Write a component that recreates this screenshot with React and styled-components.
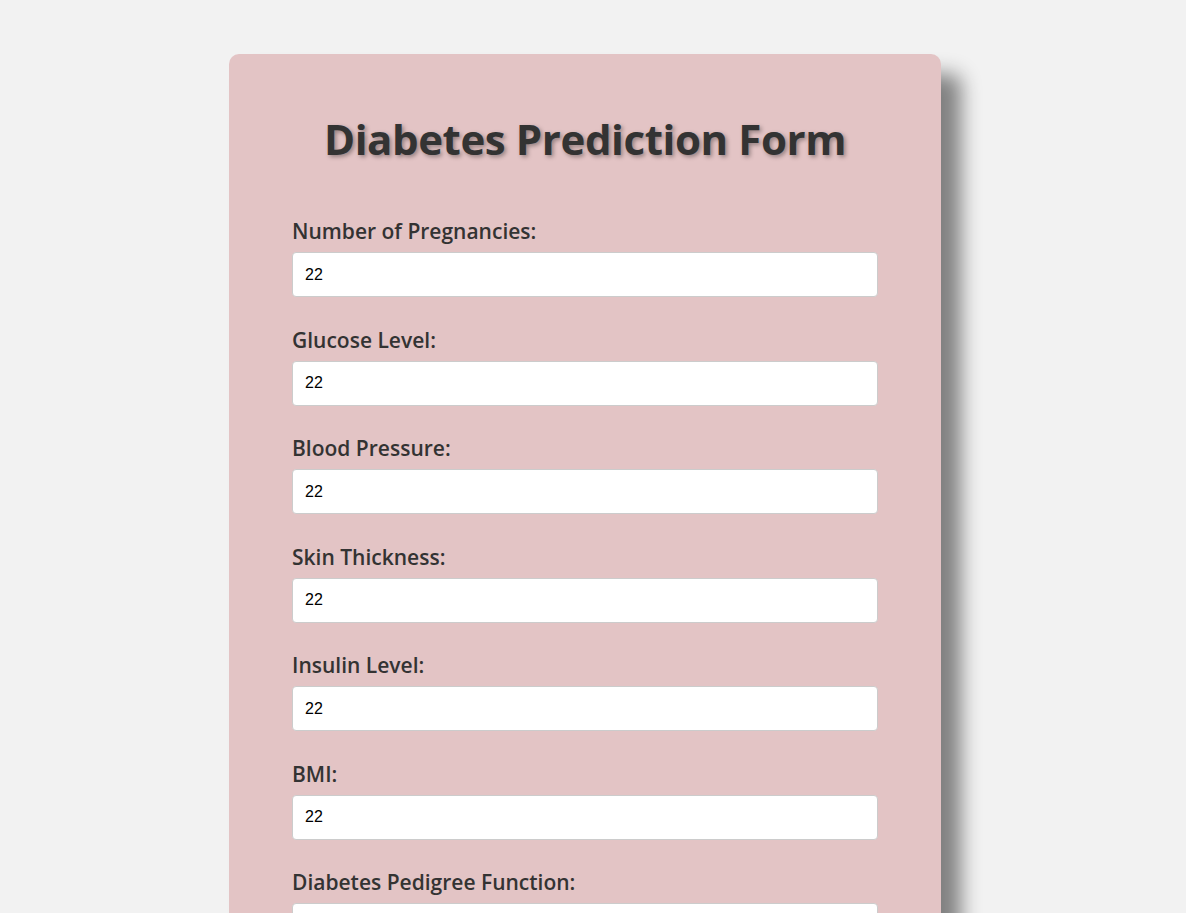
import React from "react";
import styled, { createGlobalStyle } from "styled-components";

const GlobalStyle = createGlobalStyle`
  html { overflow: hidden; }
  body {
    margin: 0;
    background: #f2f2f2;
    font-family: "Open Sans", "Noto Sans", sans-serif;
  }
`;

const Page = styled.div`
  display: flex;
  justify-content: center;
  padding: 54px 16px 40px 0;
`;

const Card = styled.div`
  width: 712px;
  box-sizing: border-box;
  background: #e3c4c5;
  border-radius: 10px;
  box-shadow: 20px 20px 20px #808080;
  padding: 55px 63px 40px;
`;

const Title = styled.h1`
  margin: 0 0 49px;
  text-align: center;
  font-family: "Open Sans", sans-serif;
  font-weight: 700;
  font-size: 42px;
  letter-spacing: -0.4px;
  line-height: 60px;
  color: #333;
  text-shadow: 2px 2px 4px rgba(0, 0, 0, 0.35);
`;

const Group = styled.div`
  margin-bottom: 29.5px;
`;

const Label = styled.label`
  display: block;
  font-family: "Open Sans", sans-serif;
  font-weight: 600;
  font-size: 21px;
  line-height: 26px;
  color: #333;
  margin-bottom: 8px;
`;

const Input = styled.input`
  display: block;
  width: 100%;
  height: 45px;
  box-sizing: border-box;
  padding: 0 12px;
  border: 1px solid #ccc;
  border-radius: 4px;
  background: #fff;
  font-family: "Liberation Sans", Arial, sans-serif;
  font-size: 16px;
  color: #000;
  outline: none;
`;

const Button = styled.button`
  width: 100%;
  height: 48px;
  border: none;
  border-radius: 4px;
  background: #333;
  color: #fff;
  font-family: "Open Sans", sans-serif;
  font-size: 18px;
`;

const fields = [
  "Number of Pregnancies:",
  "Glucose Level:",
  "Blood Pressure:",
  "Skin Thickness:",
  "Insulin Level:",
  "BMI:",
  "Diabetes Pedigree Function:",
  "Age:",
];

export default function App() {
  return (
    <>
      <GlobalStyle />
      <Page>
        <Card>
          <Title>Diabetes Prediction Form</Title>
          {fields.map((f, i) => (
            <Group key={i}>
              <Label>{f}</Label>
              <Input type="text" defaultValue="22" />
            </Group>
          ))}
          <Button>Predict</Button>
        </Card>
      </Page>
    </>
  );
}
